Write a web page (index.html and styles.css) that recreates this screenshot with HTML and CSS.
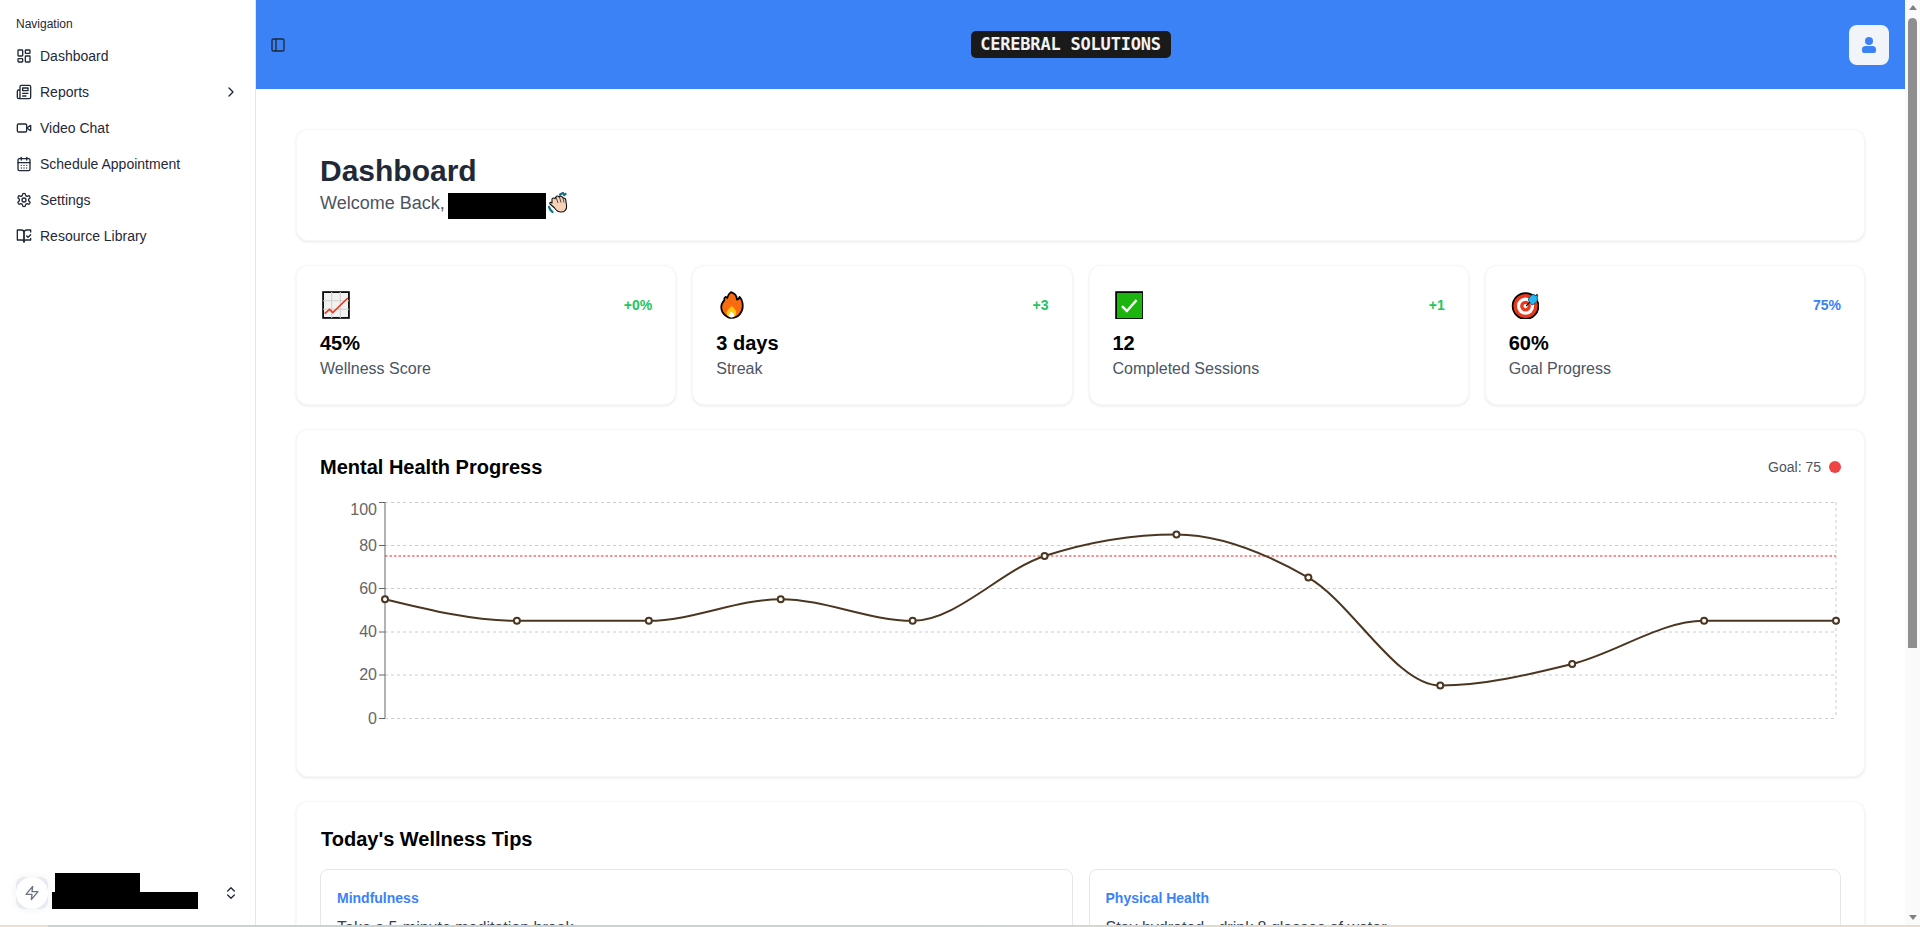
FILE: index.html
```html
<!DOCTYPE html>
<html lang="en">
<head>
    <meta charset="UTF-8">
    <meta name="viewport" content="width=device-width, initial-scale=1.0">
    <title>Cerebral Solutions Dashboard</title>
    <link rel="stylesheet" href="styles.css">
</head>
<body>
    <div class="app">
        <aside class="sidebar">
            <nav class="nav">
                <div class="nav-label">Navigation</div>
                <a class="nav-item">
                    <svg class="icon" viewBox="0 0 24 24"><rect x="3" y="3" width="7" height="9" rx="1"/><rect x="14" y="3" width="7" height="5" rx="1"/><rect x="14" y="12" width="7" height="9" rx="1"/><rect x="3" y="16" width="7" height="5" rx="1"/></svg>
                    <span>Dashboard</span>
                </a>
                <a class="nav-item">
                    <svg class="icon" viewBox="0 0 24 24"><path d="M4 22h16a2 2 0 0 0 2-2V4a2 2 0 0 0-2-2H8a2 2 0 0 0-2 2v16a2 2 0 0 1-2 2Zm0 0a2 2 0 0 1-2-2v-9c0-1.1.9-2 2-2h2"/><path d="M18 14h-8"/><path d="M15 18h-5"/><path d="M10 6h8v4h-8V6Z"/></svg>
                    <span>Reports</span>
                    <svg class="icon nav-chevron" viewBox="0 0 24 24"><path d="m9 18 6-6-6-6"/></svg>
                </a>
                <a class="nav-item">
                    <svg class="icon" viewBox="0 0 24 24"><path d="m22 8-6 4 6 4V8Z"/><rect x="2" y="6" width="14" height="12" rx="2"/></svg>
                    <span>Video Chat</span>
                </a>
                <a class="nav-item">
                    <svg class="icon" viewBox="0 0 24 24"><rect x="3" y="4" width="18" height="18" rx="2"/><path d="M16 2v4"/><path d="M8 2v4"/><path d="M3 10h18"/><path d="M8 14h.01"/><path d="M12 14h.01"/><path d="M16 14h.01"/><path d="M8 18h.01"/><path d="M12 18h.01"/><path d="M16 18h.01"/></svg>
                    <span>Schedule Appointment</span>
                </a>
                <a class="nav-item">
                    <svg class="icon" viewBox="0 0 24 24"><path d="M12.22 2h-.44a2 2 0 0 0-2 2v.18a2 2 0 0 1-1 1.73l-.43.25a2 2 0 0 1-2 0l-.15-.08a2 2 0 0 0-2.73.73l-.22.38a2 2 0 0 0 .73 2.73l.15.1a2 2 0 0 1 1 1.72v.51a2 2 0 0 1-1 1.74l-.15.09a2 2 0 0 0-.73 2.73l.22.38a2 2 0 0 0 2.73.73l.15-.08a2 2 0 0 1 2 0l.43.25a2 2 0 0 1 1 1.73V20a2 2 0 0 0 2 2h.44a2 2 0 0 0 2-2v-.18a2 2 0 0 1 1-1.73l.43-.25a2 2 0 0 1 2 0l.15.08a2 2 0 0 0 2.73-.73l.22-.39a2 2 0 0 0-.73-2.73l-.15-.08a2 2 0 0 1-1-1.74v-.5a2 2 0 0 1 1-1.74l.15-.09a2 2 0 0 0 .73-2.73l-.22-.38a2 2 0 0 0-2.73-.73l-.15.08a2 2 0 0 1-2 0l-.43-.25a2 2 0 0 1-1-1.73V4a2 2 0 0 0-2-2z"/><circle cx="12" cy="12" r="3"/></svg>
                    <span>Settings</span>
                </a>
                <a class="nav-item">
                    <svg class="icon" viewBox="0 0 24 24"><path d="M8 3H2v15h7c1.7 0 3 1.3 3 3V7c0-2.2-1.8-4-4-4Z"/><path d="m16 12 2 2 4-4"/><path d="M22 6V3h-6c-2.2 0-4 1.8-4 4v14c0-1.7 1.3-3 3-3h7v-2.3"/></svg>
                    <span>Resource Library</span>
                </a>
            </nav>
            <div class="account">
                <div class="account-avatar">
                    <div class="account-circle">
                        <svg class="icon icon-grey" viewBox="0 0 24 24"><path d="M13 2 3 14h9l-1 8 10-12h-9l1-8z"/></svg>
                    </div>
                </div>
                <div class="account-names">
                    <div class="redacted account-name"></div>
                    <div class="redacted account-mail"></div>
                </div>
                <svg class="icon nav-chevron" viewBox="0 0 24 24"><path d="m7 15 5 5 5-5"/><path d="m7 9 5-5 5 5"/></svg>
            </div>
        </aside>

        <div class="main">
            <header class="topbar">
                <svg class="icon" viewBox="0 0 24 24"><rect x="3" y="3" width="18" height="18" rx="2"/><path d="M9 3v18"/></svg>
                <div class="logo">CEREBRAL SOLUTIONS</div>
                <button class="user-btn" type="button">
                    <svg class="user-icon" viewBox="0 0 14 16"><circle cx="7" cy="4" r="4"/><path d="M3.5 9h7A3.5 3.5 0 0 1 14 12.5V14a2 2 0 0 1-2 2H2a2 2 0 0 1-2-2v-1.500A3.500 3.500 0 0 1 3.500 9z"/></svg>
                </button>
            </header>

            <main class="content">
                <section class="card welcome">
                    <h1>Dashboard</h1>
                    <p class="welcome-line">
                        <span>Welcome Back,</span>
                        <span class="redacted welcome-name"></span>
                        <svg class="welcome-hand" viewBox="0 0 22 22">
                            <path d="M13 2.500l3-1.500M17 3l1.500-1M2 15l1.500 3M4 18.500l1.500 1.500" stroke="#0b7285" stroke-width="2.200" fill="none" stroke-linecap="round"/>
                            <path d="M5 7c1-1.500 2.500-1 3-.2l1-2c.8-1.300 2.500-1 3 .2l.5-.5c1-.8 2.500-.3 3 1l1 .5c1.200-.2 2 .8 2.300 2l.8 6c.3 3.500-2 6-5.500 6-3 0-5-1.500-6.500-4L3 12c-.6-1 .2-2 1.200-1.500L5 11z" fill="#f6d3b8" stroke="#111" stroke-width="1.100" stroke-linejoin="round"/>
                            <path d="M9 5l2 6M12.500 5l1.500 5.500M16 6l1 4.500" stroke="#111" stroke-width=".7" fill="none"/>
                        </svg>
                    </p>
                </section>

                <section class="stats">
                    <div class="card stat">
                        <div class="stat-top">
                            <svg class="emoji" viewBox="0 0 26 26">
                                <rect x="1" y="1" width="24" height="24" fill="#f1f1f1" stroke="#000" stroke-width="1.600"/>
                                <path d="M9 1v24M17 1v24M1 9h24M1 17h24" stroke="#cfcfcf" stroke-width="1"/>
                                <path d="M2.500 21 7 17l3 3L24 6.500" fill="none" stroke="#e8391d" stroke-width="1.500"/>
                            </svg>
                            <span class="badge badge-green">+0%</span>
                        </div>
                        <div class="stat-value">45%</div>
                        <div class="stat-label">Wellness Score</div>
                    </div>
                    <div class="card stat">
                        <div class="stat-top">
                            <svg class="emoji" viewBox="0 0 26 26">
                                <path d="M12 1c4 1 5.500 4 5.500 7 1 0 2-1 2.500-2.500 2 2 3 5 3 8.500 0 6-4.500 11-10 11S3 20 3 15c0-3 1.500-5 3-6.500-.5-1 0-2.500 1-3 .8 0 1.300.5 1.500 1C9 4 10 2.500 12 1z" fill="#f96b0e" stroke="#000" stroke-width="1.600" stroke-linejoin="round"/>
                                <path d="M12.500 14c2.500 2 4.500 4 4.500 6.500S15 24.500 12.500 24.500 8 23 8 20.500s2.500-4 4.500-6.500z" fill="#fdc90f"/>
                                <path d="M12.500 19c1.500 1.200 2.500 2.200 2.500 3.500s-1 2-2.500 2-2.500-.8-2.500-2 1-2.300 2.500-3.500z" fill="#fff"/>
                            </svg>
                            <span class="badge badge-green">+3</span>
                        </div>
                        <div class="stat-value">3 days</div>
                        <div class="stat-label">Streak</div>
                    </div>
                    <div class="card stat">
                        <div class="stat-top">
                            <svg class="emoji" viewBox="0 0 26 26">
                                <rect x="1" y="1" width="25" height="25" fill="#1cb50e" stroke="#000" stroke-width="1.600"/>
                                <path d="M6.500 14 11 18.500 20 8.500" fill="none" stroke="#fff" stroke-width="2.200"/>
                            </svg>
                            <span class="badge badge-green">+1</span>
                        </div>
                        <div class="stat-value">12</div>
                        <div class="stat-label">Completed Sessions</div>
                    </div>
                    <div class="card stat">
                        <div class="stat-top">
                            <svg class="emoji" viewBox="0 0 26 26">
                                <circle cx="13.500" cy="14" r="12" fill="#e8391d" stroke="#000" stroke-width="1.600"/>
                                <circle cx="13.500" cy="14" r="8" fill="#fff"/>
                                <circle cx="13.500" cy="14" r="5" fill="#e8391d"/>
                                <circle cx="13.500" cy="14" r="2" fill="#fff"/>
                                <path d="M14 14 24.500 3" stroke="#000" stroke-width="1"/>
                                <path d="M16 8.500c.5-3 3-5 5.500-5.500l.5 1.500 3-.5-1 3 1 .5c-1 3-3.500 5-5.500 5.500z" fill="#25b8f0" stroke="#0a4a6e" stroke-width=".8"/>
                            </svg>
                            <span class="badge badge-blue">75%</span>
                        </div>
                        <div class="stat-value">60%</div>
                        <div class="stat-label">Goal Progress</div>
                    </div>
                </section>

                <section class="card chart-card">
                    <div class="chart-head">
                        <h3>Mental Health Progress</h3>
                        <div class="goal">
                            <span>Goal: 75</span>
                            <span class="goal-dot"></span>
                        </div>
                    </div>
                    <svg class="chart" viewBox="320 496 1521 256">
                        <g class="grid">
                            <path d="M385 502.500H1836M385 545.500H1836M385 588.500H1836M385 632H1836M385 675H1836M385 718.500H1836M1836 502V718"/>
                        </g>
                        <path class="goal-line" d="M385 556H1836"/>
                        <path class="axis" d="M385 502V718M379 502.500H385M379 545.500H385M379 588.500H385M379 632H385M379 675H385M379 718.500H385"/>
                        <g class="ticks">
                            <text x="377" y="515">100</text>
                            <text x="377" y="551">80</text>
                            <text x="377" y="594">60</text>
                            <text x="377" y="637">40</text>
                            <text x="377" y="680">20</text>
                            <text x="377" y="724">0</text>
                        </g>
                        <path class="line" d="M385 599.200C428.970 610 472.940 620.800 516.910 620.800C560.880 620.800 604.850 620.800 648.820 620.800C692.790 620.800 736.760 599.200 780.730 599.200C824.700 599.200 868.670 620.800 912.640 620.800C956.610 620.800 1000.580 570.400 1044.550 556C1088.520 541.600 1132.480 534.400 1176.450 534.400C1220.420 534.400 1264.390 552.400 1308.360 577.600C1352.330 602.800 1396.300 685.600 1440.270 685.600C1484.240 685.600 1528.210 674.800 1572.180 664C1616.150 653.200 1660.120 620.800 1704.090 620.800C1748.060 620.800 1792.030 620.800 1836 620.800"/>
                        <g class="dots">
                            <circle cx="385" cy="599.200" r="3"/>
                            <circle cx="516.910" cy="620.800" r="3"/>
                            <circle cx="648.820" cy="620.800" r="3"/>
                            <circle cx="780.730" cy="599.200" r="3"/>
                            <circle cx="912.640" cy="620.800" r="3"/>
                            <circle cx="1044.550" cy="556" r="3"/>
                            <circle cx="1176.450" cy="534.400" r="3"/>
                            <circle cx="1308.360" cy="577.600" r="3"/>
                            <circle cx="1440.270" cy="685.600" r="3"/>
                            <circle cx="1572.180" cy="664" r="3"/>
                            <circle cx="1704.090" cy="620.800" r="3"/>
                            <circle cx="1836" cy="620.800" r="3"/>
                        </g>
                    </svg>
                </section>

                <section class="card tips">
                    <h3>Today's Wellness Tips</h3>
                    <div class="tips-grid">
                        <div class="tip">
                            <h4>Mindfulness</h4>
                            <p>Take a 5-minute meditation break</p>
                        </div>
                        <div class="tip">
                            <h4>Physical Health</h4>
                            <p>Stay hydrated - drink 8 glasses of water</p>
                        </div>
                    </div>
                </section>
            </main>
        </div>

        <div class="scrollbar">
            <span class="arrow-up"></span>
            <span class="thumb"></span>
            <span class="arrow-down"></span>
        </div>
    </div>
    <div class="bottom-strip"></div>
</body>
</html>
```

FILE: styles.css
```css
* {
    box-sizing: border-box;
}
html, body {
    height: 100%;
}
body {
    margin: 0;
    display: flex;
    flex-direction: column;
    overflow: hidden;
    font-family: "Liberation Sans", Arial, sans-serif;
    color: #000;
    background: #fff;
}
h1, h3, h4, p {
    margin: 0;
}
.app {
    flex: 1;
    min-height: 0;
    display: flex;
}
.bottom-strip {
    height: 2px;
    background: linear-gradient(to right, #eadfd2 0, #eadfd2 48px, #ccd3cf 48px, #ccd3cf 50%, #e6ddd0 70%, #e6ddd0 100%);
}

/* sidebar */
.sidebar {
    width: 256px;
    flex-shrink: 0;
    display: flex;
    flex-direction: column;
    justify-content: space-between;
    padding: 8px;
    background: #fff;
    border-right: 1px solid #e5e7f0;
}
.nav {
    display: flex;
    flex-direction: column;
    gap: 4px;
}
.nav-label {
    height: 32px;
    line-height: 32px;
    padding: 0 8px;
    margin-bottom: -4px;
    font-size: 12px;
    color: #1f2937;
}
.nav-item {
    height: 32px;
    display: flex;
    align-items: center;
    gap: 8px;
    padding: 0 8px;
    font-size: 14px;
    color: #1f2937;
}
.icon {
    width: 16px;
    height: 16px;
    flex-shrink: 0;
    fill: none;
    stroke: #1f2937;
    stroke-width: 2;
    stroke-linecap: round;
    stroke-linejoin: round;
}
.icon-grey {
    stroke: #6b7280;
}
.nav-chevron {
    margin-left: auto;
}
.account {
    height: 48px;
    display: flex;
    align-items: center;
    gap: 4px;
    padding: 0 8px;
}
.account-avatar {
    width: 32px;
    height: 32px;
    border-radius: 8px;
    background: #e6ebf2;
    box-shadow: 0 0 8px rgba(0, 0, 0, 0.06);
}
.account-circle {
    width: 100%;
    height: 100%;
    display: flex;
    align-items: center;
    justify-content: center;
    border-radius: 50%;
    background: #fff;
}
.account-names {
    display: flex;
    flex-direction: column;
    align-items: flex-start;
    margin-bottom: 4px;
}
.redacted {
    background: #000;
}
.account-name {
    width: 85px;
    height: 19px;
    margin-left: 3px;
}
.account-mail {
    width: 146px;
    height: 17px;
}

/* top bar */
.main {
    flex: 1;
    min-width: 0;
    display: flex;
    flex-direction: column;
    overflow: hidden;
}
.topbar {
    height: 89px;
    flex-shrink: 0;
    display: flex;
    align-items: center;
    justify-content: space-between;
    padding: 0 16px 0 14px;
    background: #3b82f6;
}
.logo {
    width: 200px;
    height: 27px;
    line-height: 27px;
    margin-left: 6px;
    text-align: center;
    font-family: "DejaVu Sans Mono", monospace;
    font-weight: bold;
    font-size: 17px;
    letter-spacing: -0.2px;
    color: #f2f2f2;
    background: #1a1a1a;
    border-radius: 5px;
}
.user-btn {
    width: 40px;
    height: 40px;
    display: flex;
    align-items: center;
    justify-content: center;
    padding: 0;
    border: none;
    border-radius: 8px;
    background: #f1f5f9;
}
.user-icon {
    width: 14px;
    height: 16px;
    fill: #3b82f6;
}

/* main content */
.content {
    flex: 1;
    min-height: 0;
    padding: 40px;
    overflow: hidden;
}
.card {
    background: #fff;
    border: 1px solid #f7f7f8;
    border-radius: 12px;
    box-shadow: 0 1px 3px rgba(0, 0, 0, 0.09);
}
.welcome {
    padding: 23px;
    margin-bottom: 24px;
}
.welcome h1 {
    font-size: 30px;
    line-height: 36px;
    color: #1f2937;
}
.welcome-line {
    height: 28px;
    display: flex;
    align-items: flex-start;
    font-size: 18px;
    line-height: 28px;
    color: #4b5563;
}
.welcome-name {
    width: 98px;
    height: 26px;
    margin: 4px 1px 0 3.5px;
}
.welcome-hand {
    width: 22px;
    height: 22px;
    margin-top: 3px;
}
.stats {
    display: grid;
    grid-template-columns: repeat(4, 1fr);
    gap: 16px;
    margin-bottom: 24px;
}
.stat {
    padding: 23px;
}
.stat-top {
    height: 32px;
    display: flex;
    align-items: center;
    justify-content: space-between;
    margin-bottom: 8px;
}
.emoji {
    width: 28px;
    height: 28px;
    margin-left: 2px;
}
.badge {
    font-size: 14px;
    font-weight: bold;
}
.badge-green {
    color: #22c55e;
}
.badge-blue {
    color: #3b82f6;
}
.stat-value {
    font-size: 20px;
    line-height: 28px;
    font-weight: bold;
}
.stat-label {
    font-size: 16px;
    line-height: 24px;
    color: #4b5563;
}
.chart-card {
    padding: 23px;
    height: 348px;
    margin-bottom: 24px;
}
.chart-head {
    height: 28px;
    display: flex;
    align-items: center;
    justify-content: space-between;
    margin-bottom: 15px;
}
.chart-head h3,
.tips h3 {
    font-size: 20px;
    line-height: 28px;
}
.goal {
    display: flex;
    align-items: center;
    gap: 8px;
    font-size: 14px;
    color: #4b5563;
}
.goal-dot {
    width: 12px;
    height: 12px;
    border-radius: 50%;
    background: #ef4444;
}
.chart {
    display: block;
    width: 1521px;
    height: 256px;
}
.grid path {
    fill: none;
    stroke: #ccc;
    stroke-dasharray: 3 3;
}
.goal-line {
    fill: none;
    stroke: #f87171;
    stroke-width: 1.5;
    stroke-dasharray: 2.5 2;
}
.axis {
    fill: none;
    stroke: #666;
}
.ticks text {
    font-size: 16px;
    fill: #666;
    text-anchor: end;
}
.line {
    fill: none;
    stroke: #4b3621;
    stroke-width: 2;
}
.dots circle {
    fill: #fff;
    stroke: #4b3621;
    stroke-width: 2;
}
.tips {
    padding: 23px;
}
.tips h3 {
    margin: 0 0 16px 1px;
}
.tips-grid {
    display: grid;
    grid-template-columns: 1fr 1fr;
    gap: 16px;
}
.tip {
    padding: 16px;
    border: 1px solid #e5e7eb;
    border-radius: 8px;
}
.tip h4 {
    font-size: 14px;
    line-height: 24px;
    color: #3b82f6;
    margin-bottom: 6px;
}
.tip p {
    font-size: 16px;
    line-height: 24px;
    color: #374151;
}

/* page scrollbar */
.scrollbar {
    width: 15px;
    flex-shrink: 0;
    display: flex;
    flex-direction: column;
    align-items: center;
    background: #fafafa;
}
.arrow-up,
.arrow-down {
    width: 0;
    height: 0;
    border-left: 4px solid transparent;
    border-right: 4px solid transparent;
}
.arrow-up {
    margin-top: 5px;
    border-bottom: 5px solid #808080;
}
.arrow-down {
    margin: auto 0 5px;
    border-top: 5px solid #808080;
}
.thumb {
    width: 9px;
    height: 630px;
    margin-top: 8px;
    border-radius: 5px 5px 0 0;
    background: #8e8e8e;
}
```
